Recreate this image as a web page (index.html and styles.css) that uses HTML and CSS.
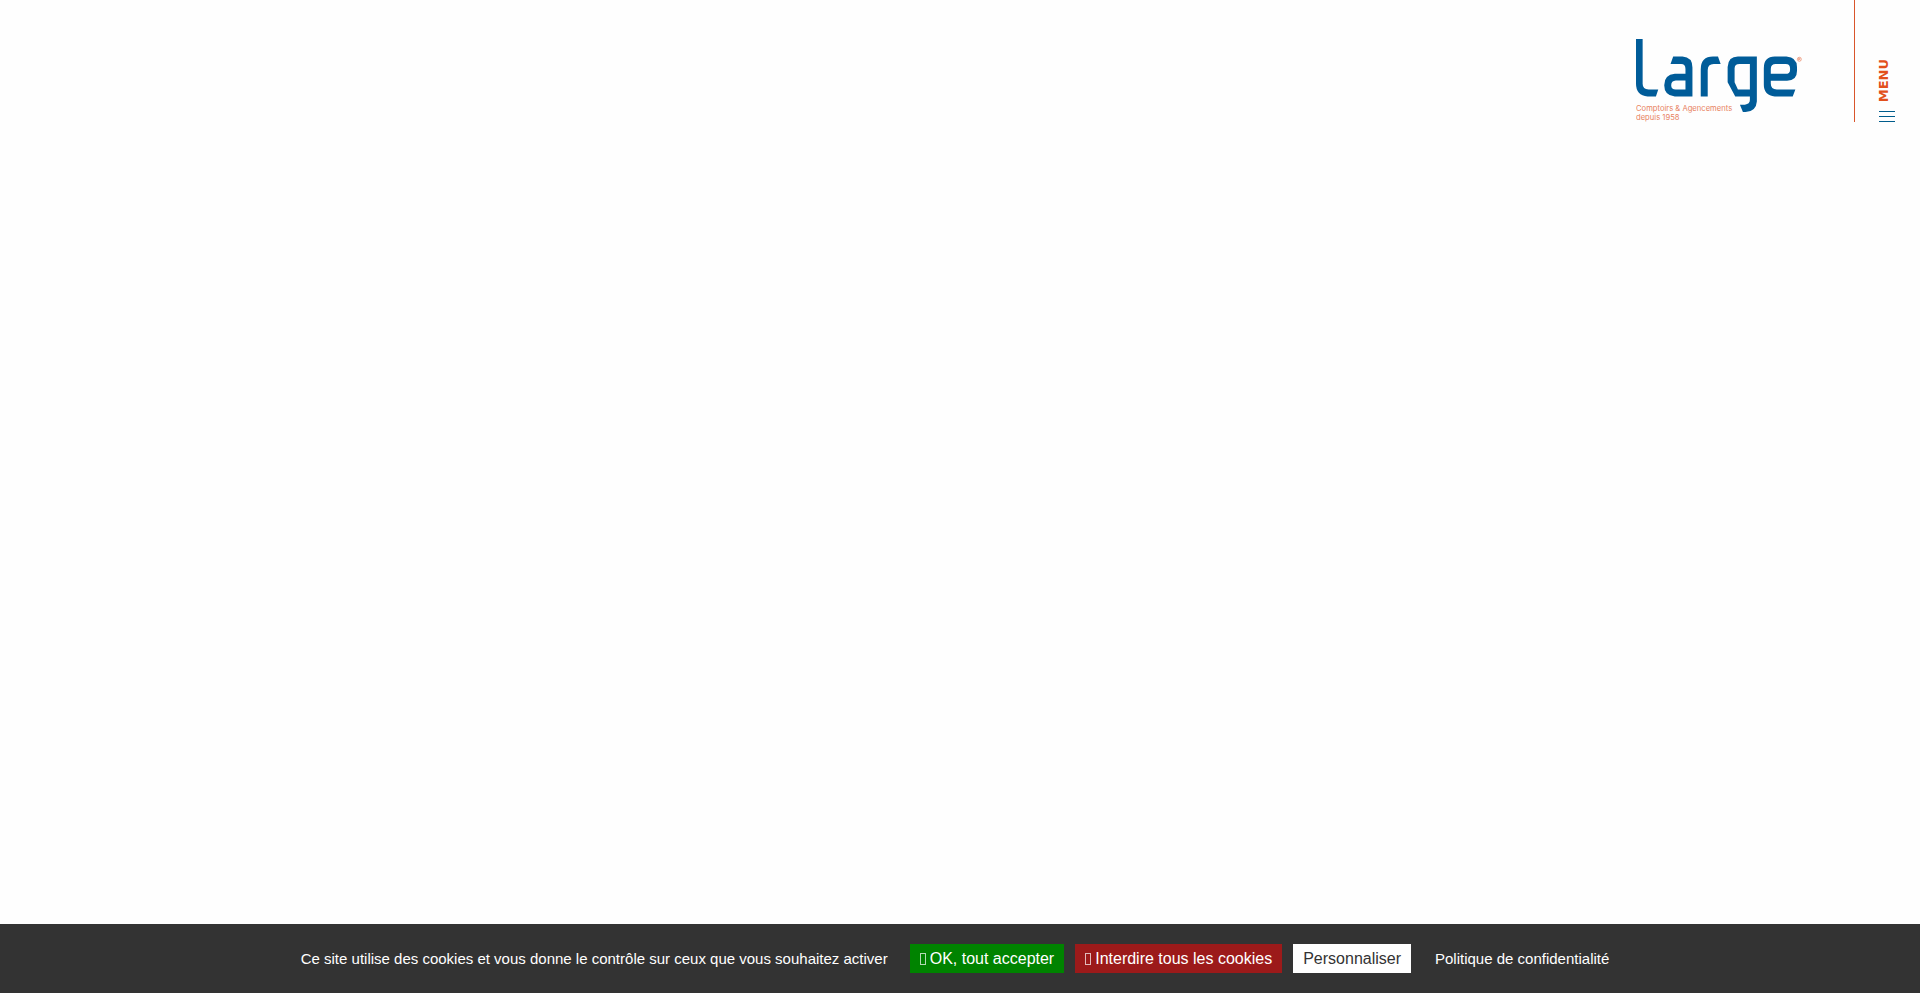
FILE: index.html
```
<!DOCTYPE html>
<html lang="fr">
<head>
    <meta charset="UTF-8">
    <meta name="viewport" content="width=device-width, initial-scale=1.0">
    <title>Large - Comptoirs &amp; Agencements</title>
    <link rel="stylesheet" href="styles.css">
</head>
<body>
    <header class="header">
        <a href="#" class="logo" aria-label="Large">
            <svg viewBox="0 0 500 250" role="img">
                <g fill="#005c99" fill-rule="evenodd">
                    <path d="M0 0H20V135Q20 152 38 152H67L60 173H35Q0 170 0 135Z"/>
                    <path d="M112 53H140Q170 55 170 86V173H117Q85 170 85 139Q85 108 117 105H149V90Q149 75 136 75H104ZM149 125H120Q106 126 106 139Q106 152 120 152H149Z"/>
                    <path d="M195 173V92Q195 53 232 53H247L255 75H234Q216 75 216 94V173Z"/>
                    <path d="M364 53V188Q362 218 330 220H322L313 198H328Q343 196 343 184V173H299L276 130V84Q278 53 307 53ZM343 75H312Q297 75 297 88V130L307 152H343Z"/>
                    <path d="M418 53H453Q485 55 485 85V96Q485 126 455 126H406V134Q406 152 424 152H480L472 173H418Q385 170 385 138V88Q385 53 418 53ZM421 75Q406 75 406 90V105H450Q464 105 464 93V88Q464 75 451 75Z"/>
                </g>
                <circle cx="492" cy="61" r="6" class="logo-mark"/>
                <path d="M490 64V58H493Q495 60 493 61H490M493 61L495 64" class="logo-mark"/>
                <text x="0" y="217" class="logo-text">Comptoirs &amp; Agencements</text>
                <text x="0" y="243" class="logo-text">depuis 1958</text>
            </svg>
        </a>
        <button type="button" class="menu-button">
            <span class="menu-label">MENU</span>
            <span class="menu-lines"><i></i><i></i><i></i></span>
        </button>
    </header>

    <main></main>

    <div class="cookie-bar">
        <span class="cookie-text">Ce site utilise des cookies et vous donne le contrôle sur ceux que vous souhaitez activer</span>
        <div class="cookie-buttons">
            <button type="button" class="btn btn-allow"><i class="glyph"></i>OK, tout accepter</button>
            <button type="button" class="btn btn-deny"><i class="glyph"></i>Interdire tous les cookies</button>
            <button type="button" class="btn btn-custom">Personnaliser</button>
        </div>
        <a href="#" class="privacy">Politique de confidentialité</a>
    </div>
</body>
</html>
```

FILE: styles.css
```
* {
    box-sizing: border-box;
}

body {
    margin: 0;
    min-height: 100vh;
    display: flex;
    flex-direction: column;
    background-color: #fefefe;
    font-family: "Liberation Sans", Arial, sans-serif;
}

main {
    flex: 1;
}

/* header */
.header {
    display: flex;
    justify-content: flex-end;
    align-items: flex-end;
}

.logo {
    margin-right: 52px;
}

.logo svg {
    display: block;
    width: 166px;
}

.logo-text {
    fill: #e8825f;
    font-family: Inter, sans-serif;
    font-size: 23px;
}

.logo-mark {
    fill: none;
    stroke: #e8825f;
    stroke-width: 2;
}

.menu-button {
    display: flex;
    flex-direction: column;
    justify-content: flex-end;
    width: 66px;
    height: 122px;
    padding: 0 0 0 24px;
    border: none;
    border-left: 1px solid #d9552b;
    background: none;
    cursor: pointer;
}

.menu-label {
    writing-mode: vertical-rl;
    transform: rotate(180deg);
    color: #e2501c;
    font-family: "DejaVu Sans", sans-serif;
    font-size: 13px;
    font-weight: bold;
    line-height: 10px;
}

.menu-lines {
    display: flex;
    flex-direction: column;
    gap: 4px;
    margin-top: 9px;
}

.menu-lines i {
    width: 16px;
    height: 1px;
    background-color: #005c8c;
}

/* cookie bar */
.cookie-bar {
    display: flex;
    justify-content: center;
    align-items: center;
    padding: 20px 10px;
    background-color: #333;
    color: #fff;
    font-size: 15px;
}

.cookie-buttons {
    display: flex;
    gap: 11px;
    margin: 0 24px 0 22px;
}

.btn {
    height: 29px;
    padding: 0 10px;
    border: none;
    color: #fff;
    font-family: inherit;
    font-size: 16px;
    cursor: pointer;
}

.btn-allow {
    background-color: #008300;
}

.btn-deny {
    background-color: #9c1a1a;
}

.btn-custom {
    background-color: #fff;
    color: #333;
}

.glyph {
    display: inline-block;
    width: 6px;
    height: 12px;
    margin-right: 4px;
    border: 1px solid rgba(255, 255, 255, 0.7);
    vertical-align: -1px;
}

.privacy {
    margin-right: 10px;
    color: #fff;
    text-decoration: none;
}
```
